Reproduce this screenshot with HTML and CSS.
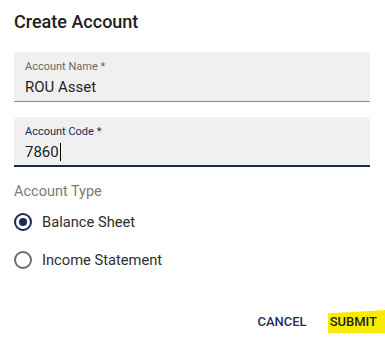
FILE: index.html
```html
<!DOCTYPE html>
<html>
<head>
<meta charset="utf-8">
<link rel="stylesheet" href="styles.css">
</head>
<body>
<div class="dialog">
  <h2 class="title">Create Account</h2>
  <div class="fields">
    <div class="field">
      <div class="label">Account Name *</div>
      <div class="value">ROU Asset</div>
    </div>
    <div class="field focused">
      <div class="label">Account Code *</div>
      <div class="value">7860<span class="caret"></span></div>
    </div>
  </div>
  <div class="group">
    <div class="group-label">Account Type</div>
    <div class="radio checked"><span class="circle"></span><span>Balance Sheet</span></div>
    <div class="radio"><span class="circle"></span><span>Income Statement</span></div>
  </div>
  <div class="actions">
    <button class="btn">CANCEL</button>
    <button class="btn highlighted"><span class="mark"></span><span class="btn-text">SUBMIT</span></button>
  </div>
</div>
</body>
</html>
```
FILE: styles.css
```css
html, body {
  margin: 0;
  padding: 0;
  background: #ffffff;
}
body {
  font-family: Roboto, "Liberation Sans", sans-serif;
  color: #212121;
  width: 385px;
  height: 337px;
  overflow: hidden;
}
.dialog {
  padding: 10px 15px 0 14px;
  display: flex;
  flex-direction: column;
}
.title {
  margin: 0;
  font-size: 18px;
  font-weight: 500;
  line-height: 24px;
  color: #212121;
}
.fields {
  margin-top: 18px;
  display: flex;
  flex-direction: column;
  gap: 15px;
}
.field {
  height: 50px;
  box-sizing: border-box;
  background: #f0f0f0;
  border-radius: 4px 4px 0 0;
  border-bottom: 1px solid #8a8a8a;
  padding: 8px 11px 0 11px;
}
.field.focused {
  border-bottom: 2px solid #1b2a52;
}
.label {
  font-size: 11px;
  line-height: 14px;
  color: #6b6b6b;
}
.focused .label {
  color: #1b2a52;
}
.value {
  margin-top: 4px;
  font-size: 15px;
  line-height: 18px;
  color: #1f1f1f;
  display: flex;
  align-items: center;
}
.caret {
  display: inline-block;
  width: 1px;
  height: 18px;
  background: #000;
  margin-left: 1px;
}
.group {
  margin-top: 16px;
  display: flex;
  flex-direction: column;
}
.group-label {
  font-size: 14.5px;
  line-height: 18px;
  color: #7a7a7a;
}
.radio {
  display: flex;
  align-items: center;
  gap: 10px;
  height: 38px;
  font-size: 14.7px;
  color: #2e2e2e;
}
.radio.checked {
  margin-top: 2px;
}
.circle {
  width: 18px;
  height: 18px;
  box-sizing: border-box;
  border: 2px solid #6f6f6f;
  border-radius: 50%;
  display: flex;
  align-items: center;
  justify-content: center;
}
.checked .circle {
  border-color: #1b2a52;
}
.checked .circle::after {
  content: "";
  width: 8px;
  height: 8px;
  border-radius: 50%;
  background: #1b2a52;
}
.actions {
  margin-top: 29px;
  display: flex;
  justify-content: flex-end;
  gap: 7px;
  margin-right: -15px;
}
.btn {
  font-family: Roboto, "Liberation Sans", sans-serif;
  font-size: 13px;
  font-weight: 500;
  letter-spacing: 0;
  color: #1e2f5e;
  background: none;
  border: none;
  padding: 6px 8px;
  position: relative;
  line-height: 16px;
}
.btn-text {
  position: relative;
}
.highlighted {
  color: #1a1f2a;
}
.mark {
  position: absolute;
  left: 6px;
  right: 0;
  top: 2px;
  bottom: 3px;
  background: #f7ec00;
  clip-path: polygon(0 14%, 60% 7%, 100% 0, 100% 100%, 0 100%);
}
```
